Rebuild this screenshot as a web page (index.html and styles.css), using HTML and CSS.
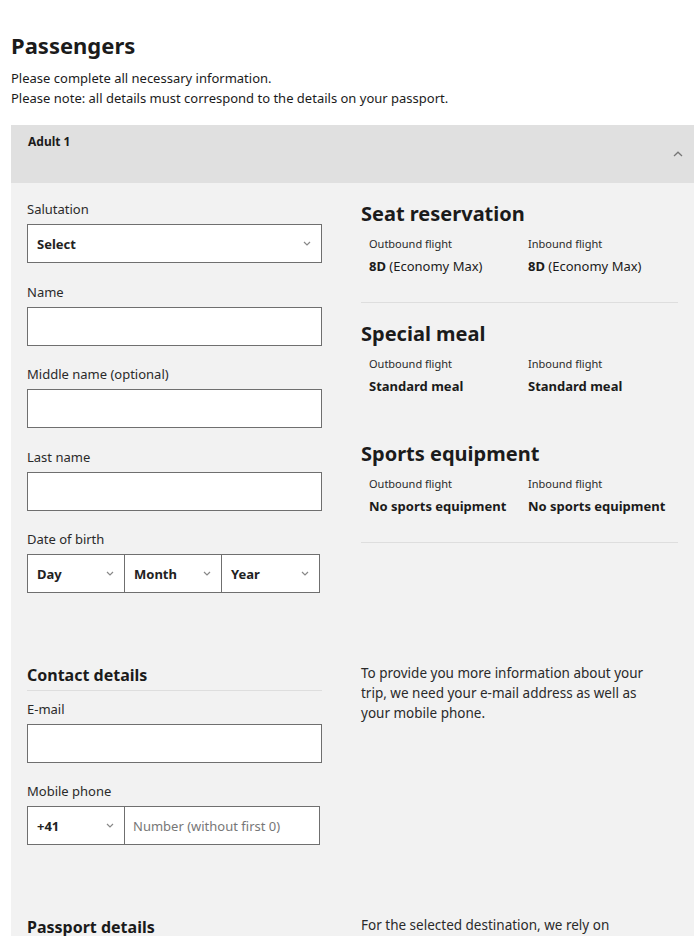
FILE: index.html
```html
<!DOCTYPE html>
<html lang="en">
<head>
    <meta charset="UTF-8">
    <meta name="viewport" content="width=device-width, initial-scale=1.0">
    <title>Passengers</title>
    <link rel="stylesheet" href="styles.css">
</head>
<body>
    <div class="page">
        <h1 class="page-title">Passengers</h1>
        <p class="intro">Please complete all necessary information.<br>Please note: all details must correspond to the details on your passport.</p>

        <div class="passenger">
            <div class="passenger-head">
                <span class="passenger-title">Adult 1</span>
                <svg class="passenger-toggle" width="10" height="6" viewBox="0 0 10 6"><path d="M1 5 L5 1.2 L9 5" fill="none" stroke="#777" stroke-width="1.3"/></svg>
            </div>

            <div class="passenger-body">
                <div class="row">
                    <div class="col-form">
                        <div class="field">
                            <label class="field-label">Salutation</label>
                            <div class="box select"><span>Select</span><svg class="caret" width="8" height="5" viewBox="0 0 8 5"><path d="M1 1 L4 4 L7 1" fill="none" stroke="#888" stroke-width="1.2"/></svg></div>
                        </div>
                        <div class="field">
                            <label class="field-label">Name</label>
                            <div class="box"></div>
                        </div>
                        <div class="field">
                            <label class="field-label">Middle name (optional)</label>
                            <div class="box"></div>
                        </div>
                        <div class="field">
                            <label class="field-label">Last name</label>
                            <div class="box"></div>
                        </div>
                        <div class="field">
                            <label class="field-label">Date of birth</label>
                            <div class="box-group dob">
                                <div class="box select"><span>Day</span><svg class="caret" width="8" height="5" viewBox="0 0 8 5"><path d="M1 1 L4 4 L7 1" fill="none" stroke="#888" stroke-width="1.2"/></svg></div>
                                <div class="box select"><span>Month</span><svg class="caret" width="8" height="5" viewBox="0 0 8 5"><path d="M1 1 L4 4 L7 1" fill="none" stroke="#888" stroke-width="1.2"/></svg></div>
                                <div class="box select"><span>Year</span><svg class="caret" width="8" height="5" viewBox="0 0 8 5"><path d="M1 1 L4 4 L7 1" fill="none" stroke="#888" stroke-width="1.2"/></svg></div>
                            </div>
                        </div>
                    </div>

                    <div class="col-info">
                        <div class="extra">
                            <h2 class="extra-title">Seat reservation</h2>
                            <div class="extra-grid">
                                <div class="extra-label">Outbound flight</div>
                                <div class="extra-label">Inbound flight</div>
                                <div class="extra-value"><b>8D</b> (Economy Max)</div>
                                <div class="extra-value"><b>8D</b> (Economy Max)</div>
                            </div>
                        </div>
                        <div class="extra no-rule">
                            <h2 class="extra-title">Special meal</h2>
                            <div class="extra-grid">
                                <div class="extra-label">Outbound flight</div>
                                <div class="extra-label">Inbound flight</div>
                                <div class="extra-value"><b>Standard meal</b></div>
                                <div class="extra-value"><b>Standard meal</b></div>
                            </div>
                        </div>
                        <div class="extra">
                            <h2 class="extra-title">Sports equipment</h2>
                            <div class="extra-grid">
                                <div class="extra-label">Outbound flight</div>
                                <div class="extra-label">Inbound flight</div>
                                <div class="extra-value"><b>No sports equipment</b></div>
                                <div class="extra-value"><b>No sports equipment</b></div>
                            </div>
                        </div>
                    </div>
                </div>

                <div class="row section">
                    <div class="col-form">
                        <h3 class="section-title">Contact details</h3>
                        <div class="field">
                            <label class="field-label">E-mail</label>
                            <div class="box"></div>
                        </div>
                        <div class="field">
                            <label class="field-label">Mobile phone</label>
                            <div class="box-group phone">
                                <div class="box select"><span>+41</span><svg class="caret" width="8" height="5" viewBox="0 0 8 5"><path d="M1 1 L4 4 L7 1" fill="none" stroke="#888" stroke-width="1.2"/></svg></div>
                                <div class="box placeholder">Number (without first 0)</div>
                            </div>
                        </div>
                    </div>
                    <div class="col-info">
                        <p class="section-note">To provide you more information about your trip, we need your e-mail address as well as your mobile phone.</p>
                    </div>
                </div>

                <div class="row section">
                    <div class="col-form">
                        <h3 class="section-title plain">Passport details</h3>
                    </div>
                    <div class="col-info">
                        <p class="section-note">For the selected destination, we rely on</p>
                    </div>
                </div>
            </div>
        </div>
    </div>
</body>
</html>
```

FILE: styles.css
```css
* {
    margin: 0;
    padding: 0;
    box-sizing: border-box;
}
body {
    font-family: "Noto Sans", "Liberation Sans", sans-serif;
    color: #1b1b1b;
    background-color: #fff;
}
.page {
    padding: 31px 2px 0 11px;
}
.page-title {
    font-size: 22px;
    line-height: 28px;
    font-weight: 700;
    margin-bottom: 9px;
}
.intro {
    font-size: 13px;
    line-height: 20px;
    margin-bottom: 17px;
}

/* passenger panel */
.passenger {
    background-color: #f2f2f2;
    padding-bottom: 20px;
}
.passenger-head {
    height: 58px;
    background-color: #e0e0e0;
    display: flex;
    justify-content: space-between;
    padding: 9px 11px 0 17px;
}
.passenger-title {
    font-size: 12px;
    line-height: 16px;
    font-weight: 700;
}
.passenger-toggle {
    margin-top: 17px;
}
.passenger-body {
    padding: 18px 16px 0 16px;
}
.row {
    display: grid;
    grid-template-columns: 295px 317px;
    column-gap: 39px;
}
.section {
    margin-top: 51px;
}

/* form fields */
.field {
    margin-bottom: 20.5px;
}
.field-label {
    display: block;
    font-size: 13px;
    line-height: 16px;
    color: #2a2a2a;
    margin-bottom: 7px;
}
.box {
    height: 39px;
    background-color: #fff;
    border: 1px solid #6f6f6f;
}
.select {
    display: flex;
    align-items: center;
    justify-content: space-between;
    padding: 0 10px 0 9px;
    font-size: 13px;
    font-weight: 700;
    color: #222;
}
.box-group {
    display: flex;
}
.box-group .box + .box {
    border-left: none;
}
.dob .box {
    width: 98px;
}
.dob .box:nth-child(2) {
    width: 97px;
}
.phone {
    width: 293px;
}
.phone .select {
    width: 98px;
}
.phone .placeholder {
    flex: 1;
    display: flex;
    align-items: center;
    padding-left: 8px;
    font-size: 13px;
    color: #777;
}

/* extras summary */
.extra {
    border-bottom: 1px solid #dedede;
    padding-bottom: 27px;
    margin-bottom: 18px;
}
.extra.no-rule {
    border-bottom-color: transparent;
}
.extra-title {
    font-size: 20px;
    line-height: 26px;
    font-weight: 700;
    margin-bottom: 10px;
}
.extra-grid {
    display: grid;
    grid-template-columns: 159px 1fr;
    padding-left: 8px;
    row-gap: 6px;
}
.extra-label {
    font-size: 11px;
    line-height: 14px;
    color: #2a2a2a;
}
.extra-value {
    font-size: 13px;
    line-height: 18px;
}

/* contact and passport */
.section-title {
    font-size: 16px;
    line-height: 20px;
    font-weight: 700;
    padding-bottom: 5px;
    border-bottom: 1px solid #dedede;
    margin-bottom: 10px;
}
.section-title.plain {
    border-bottom: none;
}
.section-note {
    max-width: 292px;
    margin-top: -2px;
    font-size: 13.5px;
    line-height: 20px;
    color: #2a2a2a;
}
```
